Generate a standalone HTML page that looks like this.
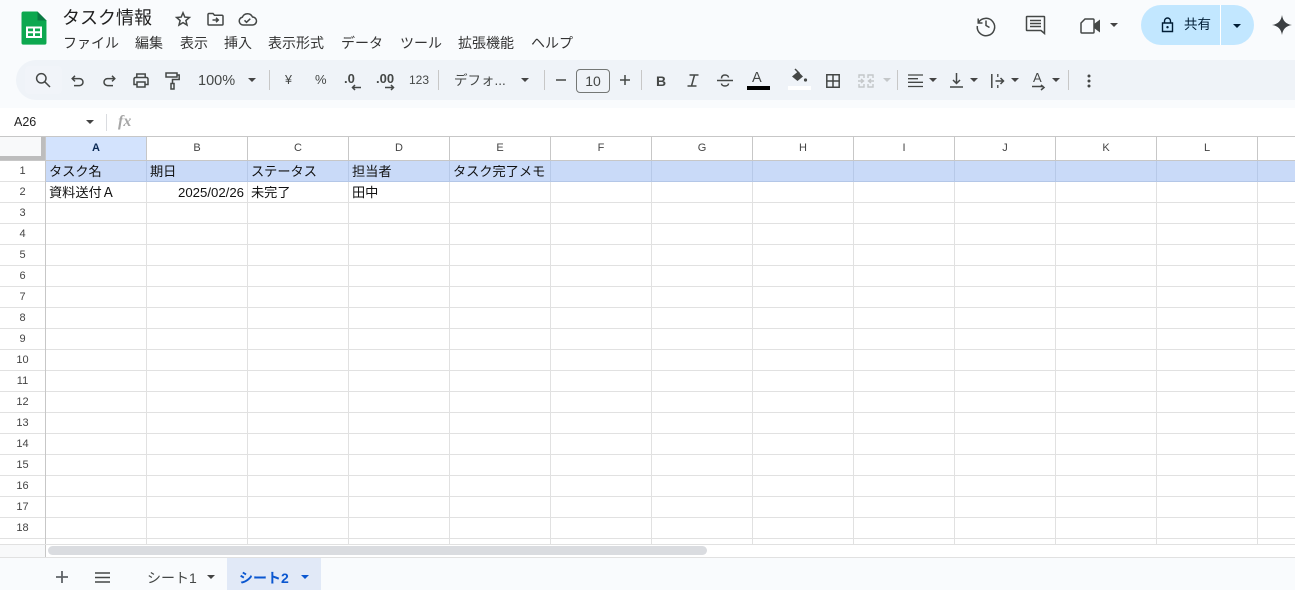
<!DOCTYPE html>
<html lang="ja"><head><meta charset="utf-8"><title>タスク情報</title>
<style>
html,body{margin:0;padding:0;width:1295px;height:590px;overflow:hidden;background:#f9fbfd;font-family:"Liberation Sans","Noto Sans CJK JP",sans-serif;color:#1f1f1f}
.a{position:absolute;white-space:nowrap}
.m{font-size:14px;top:34px;line-height:18px;color:#333}
.ch{position:absolute;top:137px;height:23px;width:100px;text-align:center;font-size:11px;line-height:23px;color:#444}
.rh{position:absolute;left:0;width:45px;height:20px;text-align:center;font-size:11px;line-height:20px;color:#444}
.c{position:absolute;font-size:13.2px;line-height:20px;height:20px;color:#111;white-space:nowrap;margin-top:1px}
.sep{position:absolute;top:70px;width:1px;height:20px;background:#c7c7c7}
.t{position:absolute;width:0;height:0;border-left:4.5px solid transparent;border-right:4.5px solid transparent;border-top:4.5px solid #444}
svg{position:absolute;overflow:visible}
.ic{fill:none;stroke:#444746;stroke-width:1.5}
.tb{font-size:14px;color:#444746;position:absolute;white-space:nowrap}
</style></head><body>

<!-- logo -->
<svg style="left:21px;top:11px" width="26" height="35" viewBox="0 0 26 35"><path d="M2 0H16.500L26 9.500V32.500a2 2 0 0 1-2 2H2a2 2 0 0 1-2-2V2a2 2 0 0 1 2-2z" fill="#0da84f" transform="translate(0.500,0.500) scale(.96)"/><path d="M16.500 .5V9.500H25.500z" fill="#0b7a43"/><path d="M5 15.500H21V27H5zM7 17.500V20.200H12V17.500zM14 17.500V20.200H19V17.500zM7 22.200V25H12V22.200zM14 22.200V25H19V22.200z" fill="#fff" fill-rule="evenodd"/></svg>

<div class="a" style="left:62px;top:6px;font-size:18px;line-height:24px;color:#1f1f1f">タスク情報</div>
<svg style="left:175px;top:11px" width="16" height="16" viewBox="0 0 16 16"><path class="ic" stroke-width="1.300" d="M8 1.800l1.800 4.300 4.600.4-3.500 3 1.100 4.500L8 11.600 4 14l1.100-4.500-3.500-3 4.600-.4z"/></svg>
<svg style="left:207px;top:12px" width="17" height="14" viewBox="0 0 17 14"><path class="ic" stroke-width="1.300" d="M1 2.500a1 1 0 0 1 1-1h4l1.500 1.700H15a1 1 0 0 1 1 1V12a1 1 0 0 1-1 1H2a1 1 0 0 1-1-1zM5.500 8H11M9 5.800L11.300 8 9 10.200"/></svg>
<svg style="left:238px;top:12px" width="19" height="14" viewBox="0 0 19 14"><path class="ic" stroke-width="1.200" d="M5 13a4 4 0 0 1-.6-7.900A5.500 5.500 0 0 1 14.500 5a4 4 0 0 1 0 8zM6.500 8.300l2 2 3.800-3.600"/></svg>

<div class="a m" style="left:63px">ファイル</div>
<div class="a m" style="left:135px">編集</div>
<div class="a m" style="left:180px">表示</div>
<div class="a m" style="left:224px">挿入</div>
<div class="a m" style="left:268px">表示形式</div>
<div class="a m" style="left:341px">データ</div>
<div class="a m" style="left:400px">ツール</div>
<div class="a m" style="left:458px">拡張機能</div>
<div class="a m" style="left:531px">ヘルプ</div>

<!-- top right -->
<svg style="left:975px;top:14px" width="22" height="22" viewBox="0 0 22 22"><path class="ic" stroke-width="2" d="M3.200 4.500V9H7.500M3.500 8.500A8.700 8.700 0 1 1 2.300 12M11 6.500V11.500L14.500 13.500"/></svg>
<svg style="left:1025px;top:15px" width="21" height="21" viewBox="0 0 21 21"><path class="ic" stroke-width="2" d="M2 1.500H19a.5.500 0 0 1 .5.500V18.500L16 15.500H2a.5.500 0 0 1-.5-.5V2a.5.500 0 0 1 .5-.5zM5 5.500H16M5 8.500H16M5 11.500H16"/></svg>
<svg style="left:1080px;top:17px" width="21" height="18" viewBox="0 0 21 18"><path class="ic" stroke-width="2" d="M5 2H13a1 1 0 0 1 1 1V15a1 1 0 0 1-1 1H2a1 1 0 0 1-1-1V6z"/><path d="M14 7L20 2.500V15.500L14 11z" fill="#444746"/></svg>
<div class="t" style="left:1110px;top:23px"></div>
<div class="a" style="left:1141px;top:5px;width:113px;height:40px;border-radius:20px;background:#c2e7ff"></div>
<div class="a" style="left:1220px;top:5px;width:1px;height:40px;background:#fff"></div>
<svg style="left:1161px;top:17px" width="13" height="16" viewBox="0 0 13 16"><path fill="none" stroke="#001d35" stroke-width="1.400" d="M1.500 6H11.500V14.500H1.500zM3.500 6V4a3 3 0 0 1 6 0V6"/><circle cx="6.500" cy="10.200" r="1.200" fill="#001d35"/></svg>
<div class="a" style="left:1184px;top:15px;font-size:13.500px;line-height:20px;color:#001d35">共有</div>
<div class="t" style="left:1232.500px;top:24px;border-top-color:#001d35"></div>
<svg style="left:1272px;top:15px" width="20" height="20" viewBox="0 0 20 20"><path d="M10 0C10.800 5.800 14 9.200 20 10C14 10.800 10.800 14.200 10 20C9.200 14.200 6 10.800 0 10C6 9.200 9.200 5.800 10 0z" fill="#3c4043"/></svg>

<!-- toolbar -->
<div class="a" style="left:16px;top:60px;width:1320px;height:40px;border-radius:20px;background:#eff3f8"></div>
<div class="a" style="left:25px;top:66px;width:37px;height:28px;border-radius:4px;background:#f1f4f9"></div>
<svg style="left:35px;top:72px" width="16" height="16" viewBox="0 0 16 16"><circle class="ic" cx="6.300" cy="6.300" r="4.700"/><path class="ic" d="M9.800 9.800L15 15"/></svg>
<svg style="left:71px;top:75px" width="13" height="12" viewBox="0 0 13 12"><path class="ic" stroke-width="1.300" d="M4 .8L1.200 3.600 4 6.400M1.500 3.600H8.500a3.500 3.500 0 0 1 0 7H3"/></svg>
<svg style="left:103px;top:75px" width="13" height="12" viewBox="0 0 13 12"><path class="ic" stroke-width="1.300" d="M9 .8L11.800 3.600 9 6.400M11.500 3.600H4.500a3.500 3.500 0 0 0 0 7H10"/></svg>
<svg style="left:133px;top:73px" width="16" height="15" viewBox="0 0 16 15"><path class="ic" stroke-width="1.500" d="M3.800 4.500V1H12.200V4.500M3.500 11.500H1V6a1.500 1.500 0 0 1 1.500-1.500H13.500A1.500 1.500 0 0 1 15 6V11.500H12.500M4 9H12V14H4z"/></svg>
<svg style="left:165px;top:72px" width="15" height="18" viewBox="0 0 15 18"><path class="ic" stroke-width="1.300" d="M1 1H12V5H1zM12 3H14.200V7.500H7.500V11.500M6 11.500H9V17H6z"/></svg>
<div class="tb" style="left:198px;top:72px;line-height:18px;font-size:14.500px">100%</div>
<div class="t" style="left:248px;top:78px"></div>
<div class="sep" style="left:269px"></div>
<div class="tb" style="left:285px;top:72px;font-size:12.500px;line-height:16px">¥</div>
<div class="tb" style="left:315px;top:72px;font-size:13px;line-height:16px">%</div>
<div class="tb" style="left:344px;top:71px;font-size:13px;line-height:16px;font-weight:bold">.0</div>
<svg style="left:351px;top:84px" width="11" height="7" viewBox="0 0 11 7"><path class="ic" stroke-width="1.300" d="M10 3.500H1.500M4 1L1.500 3.500 4 6"/></svg>
<div class="tb" style="left:376px;top:71px;font-size:13px;line-height:16px;font-weight:bold">.00</div>
<svg style="left:384px;top:84px" width="11" height="7" viewBox="0 0 11 7"><path class="ic" stroke-width="1.300" d="M1 3.500H9.500M7 1L9.500 3.500 7 6"/></svg>
<div class="tb" style="left:409px;top:72px;font-size:12px;line-height:16px">123</div>
<div class="sep" style="left:438px"></div>
<div class="tb" style="left:454px;top:72px;font-size:13.500px;line-height:18px">デフォ...</div>
<div class="t" style="left:521px;top:78px"></div>
<div class="sep" style="left:544px"></div>
<svg style="left:556px;top:75px" width="10" height="10"><path d="M0 5H10" stroke="#444746" stroke-width="1.500"/></svg>
<div class="a" style="left:576px;top:69px;width:32px;height:22px;border:1px solid #747775;border-radius:4px;text-align:center;font-size:14px;line-height:22px;color:#444746">10</div>
<svg style="left:620px;top:75px" width="10" height="10"><path d="M0 5H10M5 0V10" stroke="#444746" stroke-width="1.500"/></svg>
<div class="sep" style="left:641px"></div>
<div class="tb" style="left:656px;top:72px;font-size:14px;line-height:18px;font-weight:bold">B</div>
<svg style="left:687px;top:74px" width="12" height="13" viewBox="0 0 12 13"><path class="ic" stroke-width="1.700" d="M2.500 1H11.500M.5 12H9.500M7.500 1L4.500 12"/></svg>
<svg style="left:717px;top:74px" width="16" height="13" viewBox="0 0 16 13"><path class="ic" stroke-width="1.400" d="M0 6.500H16M4.500 4.500C4.500 2 6 1 8 1s3.500 1 3.500 2.500M4.500 9.500C4.500 11 6 12 8 12s3.500-1 3.500-2.500"/></svg>
<div class="tb" style="left:752px;top:71px;font-size:14.500px;line-height:15px">A</div>
<div class="a" style="left:747px;top:86px;width:23px;height:4px;background:#000"></div>
<svg style="left:790px;top:68px" width="18" height="16" viewBox="0 0 18 16"><path d="M2 8.500L8 3.500L13 8.500L7.500 13z" fill="#444746"/><path class="ic" stroke-width="1.300" d="M5 1L9.500 5.500"/><circle cx="15.500" cy="12" r="1.600" fill="#444746"/></svg>
<div class="a" style="left:788px;top:86px;width:23px;height:4px;background:#fff"></div>
<svg style="left:826px;top:74px" width="14" height="14" viewBox="0 0 14 14"><path class="ic" stroke-width="1.400" d="M.8.800H13.200V13.200H.8zM7 .8V13.200M.8 7H13.200"/></svg>
<svg style="left:858px;top:74px" width="16" height="14" viewBox="0 0 16 14"><path fill="none" stroke="#c4c7c9" stroke-width="1.400" d="M1 4V1H6V4M10 4V1H15V4M1 10V13H6V10M10 10V13H15V10M0 7H5M3 5L5.500 7 3 9M16 7H11M13 5L10.500 7 13 9"/></svg>
<div class="t" style="left:883px;top:78px;border-top-color:#c4c7c9"></div>
<div class="sep" style="left:897px"></div>
<svg style="left:908px;top:74px" width="15" height="14" viewBox="0 0 15 14"><path stroke="#444746" stroke-width="1.300" d="M0 1H15M0 4.700H10M0 8.300H15M0 12.500H15"/></svg>
<div class="t" style="left:929px;top:78px"></div>
<svg style="left:950px;top:73px" width="13" height="15" viewBox="0 0 13 15"><path class="ic" stroke-width="1.400" d="M0 14H13M6.500 0V10M3 7L6.500 10.500 10 7"/></svg>
<div class="t" style="left:970px;top:78px"></div>
<svg style="left:991px;top:73px" width="13" height="16" viewBox="0 0 13 16"><path class="ic" stroke-width="1.300" d="M.8 1V15M4.500 8H12M9.500 5L12.500 8 9.500 11"/><path stroke="#444746" stroke-width="1.300" d="M6.800 1V4M6.800 12V15"/></svg>
<div class="t" style="left:1011px;top:78px"></div>
<div class="tb" style="left:1033px;top:70px;font-size:13px;line-height:15px">A</div>
<svg style="left:1032px;top:85px" width="13" height="7" viewBox="0 0 13 7"><path class="ic" stroke-width="1.200" d="M0 1.500H11.500M9 0L12 2.500 9 5"/></svg>
<div class="t" style="left:1052px;top:78px"></div>
<div class="sep" style="left:1068px"></div>
<svg style="left:1087px;top:74px" width="4" height="14"><circle cx="2" cy="2" r="1.500" fill="#444746"/><circle cx="2" cy="7" r="1.500" fill="#444746"/><circle cx="2" cy="12" r="1.500" fill="#444746"/></svg>

<!-- formula bar -->
<div class="a" style="left:0;top:108px;width:1295px;height:29px;background:#fff"></div>
<div class="a" style="left:14px;top:113px;font-size:12.500px;line-height:18px;color:#222">A26</div>
<div class="t" style="left:85.500px;top:120px"></div>
<div class="a" style="left:106px;top:114px;width:1px;height:17px;background:#dadce0"></div>
<div class="a" style="left:118px;top:113px;font:italic bold 16px/18px 'Liberation Serif',serif;color:#a6a6a6">fx</div>

<!-- grid -->
<div class="a" style="left:0;top:136px;width:1295px;height:408px;background-color:#fff"></div>
<div class="a" style="left:46px;top:161px;width:1249px;height:383px;background-image:repeating-linear-gradient(to right,transparent 0,transparent 100px,#e1e1e1 100px,#e1e1e1 101px),repeating-linear-gradient(to bottom,transparent 0,transparent 20px,#e1e1e1 20px,#e1e1e1 21px)"></div>
<!-- row 1 fill -->
<div class="a" style="left:46px;top:161px;width:1249px;height:20px;background-color:#c9daf8;background-image:repeating-linear-gradient(to right,transparent 0,transparent 100px,#b7c9e8 100px,#b7c9e8 101px)"></div>
<div class="a" style="left:46px;top:181px;width:1249px;height:1px;background:#b4c7e7"></div>
<!-- headers -->
<div class="a" style="left:0;top:136px;width:1295px;height:1px;background:#c7c7c7"></div>
<div class="a" style="left:0;top:137px;width:45px;height:23px;background:#f8f9fa"></div>
<div class="a" style="left:41px;top:137px;width:4px;height:23px;background:#bdbdbd"></div>
<div class="a" style="left:0;top:156px;width:45px;height:4px;background:#bdbdbd"></div>
<div class="a" style="left:46px;top:137px;width:100px;height:23px;background:#d3e3fd"></div>
<div class="a" style="left:146px;top:137px;width:1149px;height:23px;background-image:repeating-linear-gradient(to right,#c7c7c7 0,#c7c7c7 1px,transparent 1px,transparent 101px)"></div>
<div class="a" style="left:0;top:160px;width:1295px;height:1px;background:#c7c7c7"></div>
<div class="a" style="left:45px;top:137px;width:1px;height:407px;background:#c7c7c7"></div>
<div class="a" style="left:0;top:181px;width:45px;height:363px;background-image:repeating-linear-gradient(to bottom,#e1e1e1 0,#e1e1e1 1px,transparent 1px,transparent 21px)"></div>

<div class="ch" style="left:46px;font-weight:bold;color:#0b2a55">A</div>
<div class="ch" style="left:147px">B</div>
<div class="ch" style="left:248px">C</div>
<div class="ch" style="left:349px">D</div>
<div class="ch" style="left:450px">E</div>
<div class="ch" style="left:551px">F</div>
<div class="ch" style="left:652px">G</div>
<div class="ch" style="left:753px">H</div>
<div class="ch" style="left:854px">I</div>
<div class="ch" style="left:955px">J</div>
<div class="ch" style="left:1056px">K</div>
<div class="ch" style="left:1157px">L</div>

<div class="rh" style="top:161px">1</div><div class="rh" style="top:182px">2</div><div class="rh" style="top:203px">3</div><div class="rh" style="top:224px">4</div><div class="rh" style="top:245px">5</div><div class="rh" style="top:266px">6</div><div class="rh" style="top:287px">7</div><div class="rh" style="top:308px">8</div><div class="rh" style="top:329px">9</div><div class="rh" style="top:350px">10</div><div class="rh" style="top:371px">11</div><div class="rh" style="top:392px">12</div><div class="rh" style="top:413px">13</div><div class="rh" style="top:434px">14</div><div class="rh" style="top:455px">15</div><div class="rh" style="top:476px">16</div><div class="rh" style="top:497px">17</div><div class="rh" style="top:518px">18</div>

<div class="c" style="left:49px;top:161px">タスク名</div>
<div class="c" style="left:150px;top:161px">期日</div>
<div class="c" style="left:251px;top:161px">ステータス</div>
<div class="c" style="left:352px;top:161px">担当者</div>
<div class="c" style="left:453px;top:161px">タスク完了メモ</div>
<div class="c" style="left:49px;top:182px">資料送付Ａ</div>
<div class="c" style="left:147px;top:182px;width:97px;text-align:right">2025/02/26</div>
<div class="c" style="left:251px;top:182px">未完了</div>
<div class="c" style="left:352px;top:182px">田中</div>

<!-- scrollbar -->
<div class="a" style="left:0;top:544px;width:1295px;height:1px;background:#e1e1e1"></div>
<div class="a" style="left:0;top:545px;width:45px;height:12px;background:#f8f9fa;border-right:1px solid #c7c7c7"></div>
<div class="a" style="left:46px;top:545px;width:1249px;height:12px;background:#fff"></div>
<div class="a" style="left:48px;top:546px;width:659px;height:9px;border-radius:5px;background:#dadce0"></div>
<div class="a" style="left:0;top:557px;width:1295px;height:1px;background:#e1e1e1"></div>

<!-- sheet tabs -->
<svg style="left:56px;top:571px" width="12" height="12"><path d="M0 6H12M6 0V12" stroke="#5f6368" stroke-width="1.800"/></svg>
<svg style="left:95px;top:572px" width="15" height="11"><path d="M0 1H15M0 5.500H15M0 10H15" stroke="#444746" stroke-width="1.600"/></svg>
<div class="a" style="left:147px;top:568px;font-size:14px;line-height:20px;color:#444746">シート1</div>
<div class="t" style="left:207px;top:575px"></div>
<div class="a" style="left:227px;top:558px;width:94px;height:32px;background:#e1e9f7"></div>
<div class="a" style="left:239px;top:568px;font-size:14px;line-height:20px;font-weight:bold;color:#0b57d0">シート2</div>
<div class="t" style="left:300.500px;top:575px;border-top-color:#0b57d0"></div>
</body></html>
